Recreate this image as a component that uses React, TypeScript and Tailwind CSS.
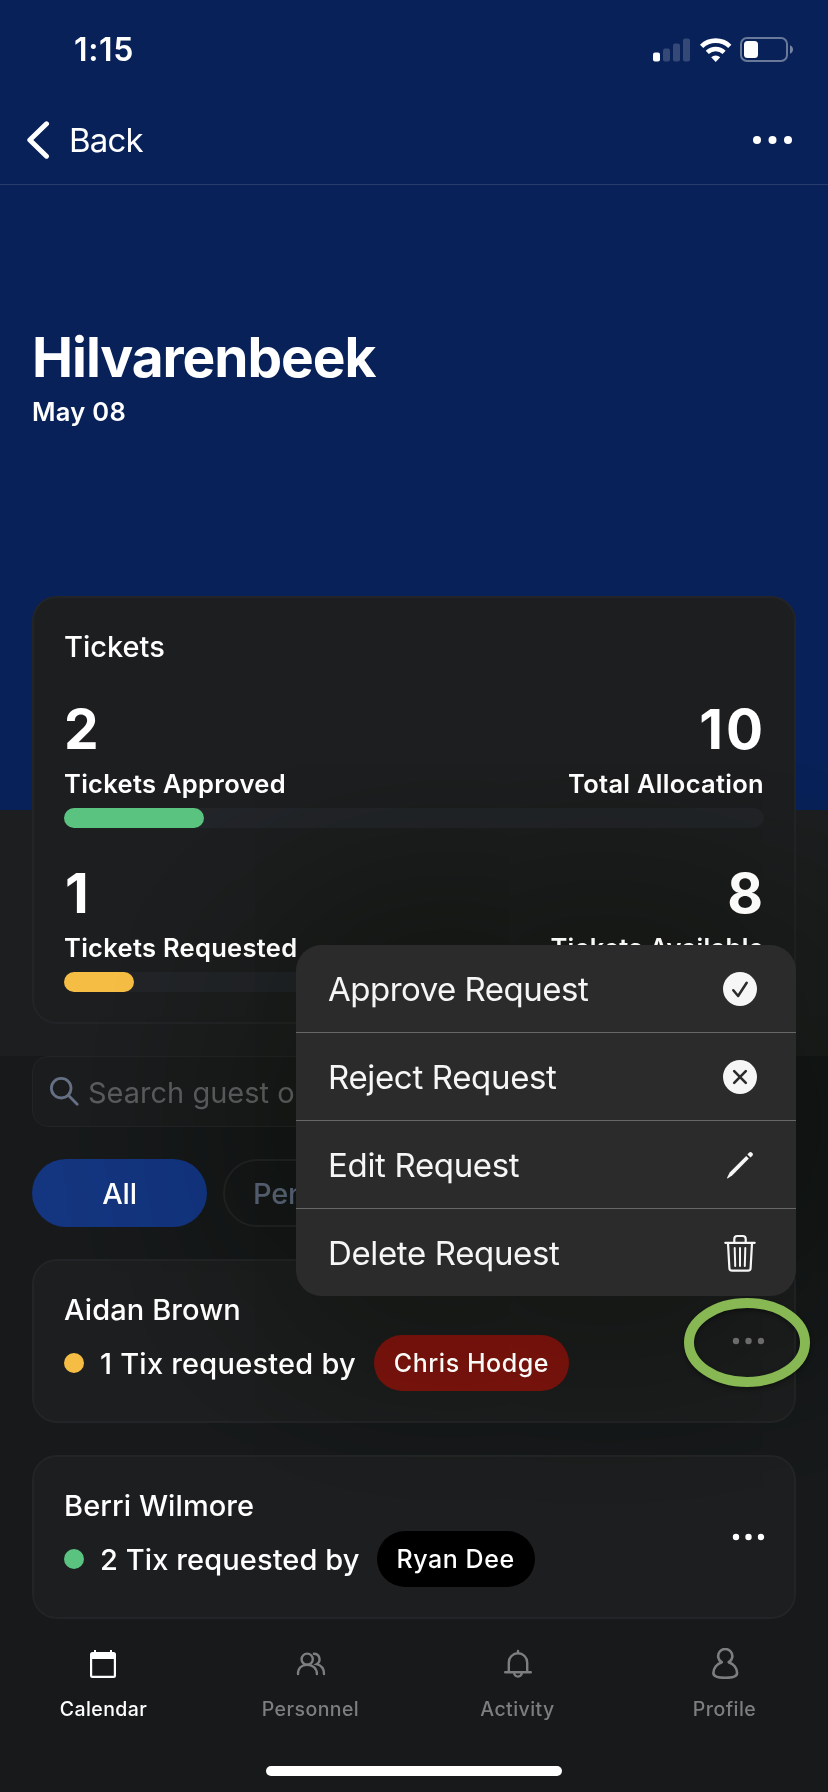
import type { ReactNode } from "react";

function StatusBar() {
  return (
    <div className="flex h-24 items-center justify-between pt-[3px] pr-[34px] pl-[74px]">
      <span className="text-[32px] leading-none font-semibold tracking-[0.68px]">1:15</span>
      <div className="flex items-center">
        <svg width="38" height="24" viewBox="0 0 38 24" fill="#fff">
          <rect x="0" y="14.5" width="7" height="9" rx="2" />
          <rect x="10" y="10.5" width="7" height="13" rx="2" opacity=".18" />
          <rect x="20" y="5.5" width="7" height="18" rx="2" opacity=".18" />
          <rect x="30" y="0.5" width="7" height="23" rx="2" opacity=".18" />
        </svg>
        <svg className="ml-2" width="34" height="26" viewBox="0 0 34 26" fill="none" stroke="#fff">
          <path d="M2.6 9.4a20.2 20.2 0 0 1 28.2 0" strokeWidth="4.6" />
          <path d="M8.3 15.4a12 12 0 0 1 16.8 0" strokeWidth="4.4" />
          <path d="M12.2 20.2a6.6 6.6 0 0 1 9 0l-4.5 4.8z" fill="#fff" stroke="none" />
        </svg>
        <svg className="ml-[7px]" width="54" height="26" viewBox="0 0 54 26">
          <rect x="1" y="1" width="46" height="23" rx="6" fill="none" stroke="#fff" strokeOpacity=".4" strokeWidth="2" />
          <rect x="4" y="4" width="14" height="17" rx="3.5" fill="#fff" />
          <path d="M50 8.3c4 1.4 4 7 0 8.4z" fill="#fff" fillOpacity=".45" />
        </svg>
      </div>
    </div>
  );
}

function NavBar() {
  return (
    <div className="flex h-[89px] items-center justify-between border-b border-[#293b6a] pr-9 pl-[26px]">
      <div className="flex items-center">
        <svg width="24" height="38" viewBox="0 0 24 38" fill="none" stroke="#fff" strokeWidth="5" strokeLinecap="round" strokeLinejoin="round">
          <path d="M20.5 2.8 3.8 19l16.700 16.200" />
        </svg>
        <span className="ml-[19px] text-[33px] leading-none tracking-[-0.8px]">Back</span>
      </div>
      <svg width="39" height="8" viewBox="0 0 39 8" fill="#fff">
        <circle cx="4" cy="4" r="4" />
        <circle cx="19.500" cy="4" r="4" />
        <circle cx="35" cy="4" r="4" />
      </svg>
    </div>
  );
}

function Stat({ value, label, right }: { value: ReactNode; label: string; right?: boolean }) {
  return (
    <div className={right ? "flex flex-col items-end" : "flex flex-col items-start"}>
      <span className="text-[55px] leading-[64px] font-bold">{value}</span>
      <span className="text-[25.5px] leading-[46px] font-[560] tracking-[0.3px]">{label}</span>
    </div>
  );
}

function Progress({ percent, color }: { percent: number; color: string }) {
  return (
    <div className="mt-px h-5 rounded-full bg-[#222429]">
      <div className={`h-full rounded-full ${color}`} style={{ width: `${percent}%` }} />
    </div>
  );
}

function TicketsCard() {
  return (
    <section className="mx-8 -mt-[214px] h-[428px] rounded-[25px] border-2 border-[#232427] bg-[#1d1e20] px-[30px] pt-[28px]">
      <h2 className="text-[29px] leading-[41px] font-medium">Tickets</h2>
      <div className="mt-[30px] flex justify-between">
        <Stat value="2" label="Tickets Approved" />
        <Stat right value={<span className="-mr-[2px] tracking-[3px]">10</span>} label="Total Allocation" />
      </div>
      <Progress percent={20} color="bg-[#5ac380]" />
      <div className="mt-[33px] flex justify-between">
        <Stat value={<span className="ml-px">1</span>} label="Tickets Requested" />
        <Stat right value={<span className="mr-px">8</span>} label="Tickets Available" />
      </div>
      <Progress percent={10} color="bg-[#f6bd45]" />
    </section>
  );
}

function SearchField() {
  return (
    <div className="mx-8 flex h-[71px] items-center rounded-2xl border border-[#232427] bg-[#1b1c1e] pl-[17px]">
      <svg width="29" height="29" viewBox="0 0 29 29" fill="none" stroke="#667085" strokeWidth="2.8" strokeLinecap="round">
        <circle cx="11.200" cy="11.200" r="9.800" />
        <path d="m18.300 18.300 8.900 8.900" />
      </svg>
      <span className="ml-[9px] pt-0.5 text-[29px] leading-none text-[#5a5b5e]">
        Search guest or personnel
      </span>
    </div>
  );
}

function Filters() {
  return (
    <div className="mx-8 mt-8 flex h-[68px] gap-4 text-[29px] leading-none font-medium tracking-[-0.2px]">
      <div className="flex w-[175px] items-center justify-center rounded-full bg-[#14357f]">All</div>
      <div className="flex w-[176px] items-center rounded-full border-2 border-[#232427] pl-[28px] text-[#576073]">
        Pending
      </div>
    </div>
  );
}

function RequestCard({ name, request, dot, by, pill, dots }: {
  name: string; request: ReactNode; dot: string; by: string; pill: string; dots: string;
}) {
  return (
    <article className="mx-8 mt-8 flex h-[164px] items-center justify-between rounded-[25px] border-2 border-[#232427] bg-[#1d1e20] pr-[29px] pl-[30px]">
      <div className="h-full pt-[28px]">
        <h3 className="text-[29px] leading-[41px] font-medium tracking-[0.1px]">{name}</h3>
        <div className="mt-[5px] flex h-14 items-center">
          <span className={`size-5 rounded-full ${dot}`} />
          <span className="ml-4 text-[29px] leading-none font-medium">{request}</span>
          <span className={`flex h-14 items-center justify-center rounded-full text-[25px] leading-none font-[450] tracking-[0.55px] ${pill}`}>
            {by}
          </span>
        </div>
      </div>
      <svg width="33" height="8" viewBox="0 0 33 8" className={dots} fill="currentColor">
        <circle cx="4" cy="4" r="3.2" />
        <circle cx="16.500" cy="4" r="3.2" />
        <circle cx="29" cy="4" r="3.2" />
      </svg>
    </article>
  );
}

function CalendarIcon() {
  return (
    <svg className="-ml-px" width="32" height="32" viewBox="0 0 32 32">
      <path fill="#fff" fillRule="evenodd" d="M7 2h2v2h14V2h2v2h1.500A2.500 2.500 0 0 1 29 6.500v21a2.500 2.500 0 0 1-2.500 2.500h-21A2.500 2.500 0 0 1 3 27.500v-21A2.500 2.500 0 0 1 5.500 4H7zM5.200 11v16.700h21.600V11z" />
    </svg>
  );
}

function PeopleIcon() {
  return (
    <svg width="32" height="32" viewBox="0 0 32 32" fill="none" stroke="currentColor" strokeWidth="2.400" strokeLinecap="round">
      <circle cx="12.200" cy="11.200" r="5.600" />
      <path d="M3 26c0-6 4-9.200 9.200-9.200S21.900 20 21.900 26" />
      <path d="M18.900 5.700a5.600 5.600 0 0 1 2.700 10.500c4.600 1.100 7.400 4.700 7.400 9.800" />
    </svg>
  );
}

function BellIcon() {
  return (
    <svg width="32" height="32" viewBox="0 0 32 32" fill="none" stroke="currentColor" strokeWidth="2.400" strokeLinecap="round">
      <path d="M16 3v2.200M6.800 23.600V14.500a9.200 9.200 0 0 1 18.400 0v9.100M3.200 24.300h25.600" />
      <path d="M12.200 24.800a3.800 3.800 0 0 0 7.600 0" />
    </svg>
  );
}

function ProfileIcon() {
  return (
    <svg width="32" height="32" viewBox="0 0 32 32" fill="none" stroke="currentColor" strokeWidth="2.600" strokeLinecap="round" strokeLinejoin="round">
      <path d="M12.600 14.200a7.100 7.100 0 1 1 7.300 0" />
      <path d="M12.600 14.200C7.800 16 4.400 20.300 4.400 25c0 3.600 5.300 4.800 11.800 4.800S28.100 28.600 28.100 25c0-4.700-3.400-9-8.200-10.800" />
    </svg>
  );
}

function TabBar() {
  const tabs = [
    { label: "Calendar", icon: <CalendarIcon />, active: true },
    { label: "Personnel", icon: <PeopleIcon />, active: false },
    { label: "Activity", icon: <BellIcon />, active: false },
    { label: "Profile", icon: <ProfileIcon />, active: false },
  ];
  return (
    <nav className="mt-[29px] grid grid-cols-4">
      {tabs.map((tab) => (
        <div key={tab.label} className={tab.active ? "flex flex-col items-center text-white" : "flex flex-col items-center text-[#7d7e80]"}>
          {tab.icon}
          <span className="mt-[15px] text-[19.5px] leading-[28px] font-medium tracking-[0.44px]">{tab.label}</span>
        </div>
      ))}
    </nav>
  );
}

function CheckCircle() {
  return (
    <svg width="34" height="34" viewBox="0 0 34 34" fill="none">
      <circle cx="17" cy="17" r="17" fill="#f6f6f6" />
      <path d="m10.300 18.300 4.800 5.700 8.600-13.200" stroke="#2b2b2b" strokeWidth="2.500" strokeLinecap="round" strokeLinejoin="round" />
    </svg>
  );
}

function CrossCircle() {
  return (
    <svg width="34" height="34" viewBox="0 0 34 34" fill="none">
      <circle cx="17" cy="17" r="17" fill="#f6f6f6" />
      <path d="m11.200 11.200 11.600 11.600M22.800 11.200 11.200 22.800" stroke="#2b2b2b" strokeWidth="2.600" strokeLinecap="round" />
    </svg>
  );
}

function Pencil() {
  return (
    <svg width="34" height="34" viewBox="0 0 34 34" fill="#f6f6f6">
      <path d="M23.200 7.900 25.900 10.600 9.400 27.200 4.600 30.400Q3.900 30.500 4.100 29.700L6.700 24.500z" />
      <path d="m24.400 6.500 1.800-1.900a1.900 1.900 0 0 1 2.600 0l.6.6a1.900 1.900 0 0 1 0 2.600l-1.900 1.800z" />
    </svg>
  );
}

function Trash() {
  return (
    <svg width="34" height="38" viewBox="0 0 34 38" fill="none" stroke="#f6f6f6" strokeWidth="2.200" strokeLinecap="round" strokeLinejoin="round">
      <path d="M2.300 8.800h29.400M11.300 8.300V5a3 3 0 0 1 3-3h5.400a3 3 0 0 1 3 3v3.300" />
      <path d="m5 9.200 1.400 25a2.500 2.500 0 0 0 2.500 2.400h16.200a2.500 2.500 0 0 0 2.500-2.400L29 9.200" />
      <path d="m11.700 14 .5 18M17 14v18M22.300 14l-.5 18" strokeWidth="2" />
    </svg>
  );
}

function ContextMenu() {
  const items = [
    { label: "Approve Request", icon: <CheckCircle />, tracking: "tracking-[-0.5px]" },
    { label: "Reject Request", icon: <CrossCircle />, tracking: "tracking-[-0.34px]" },
    { label: "Edit Request", icon: <Pencil />, tracking: "tracking-[-0.33px]" },
    { label: "Delete Request", icon: <Trash />, tracking: "tracking-[-0.36px]" },
  ];
  return (
    <>
      <div className="absolute top-[945px] left-[296px] h-[351px] w-[500px] rounded-[26px] mix-blend-difference shadow-[0_0_240px_40px_#110e17]" />
      <div className="absolute top-[945px] left-[296px] w-[500px] divide-y divide-[#676767] overflow-hidden rounded-[26px] bg-[#2b2b2b] text-[#f6f6f6]">
        {items.map((item) => (
          <div key={item.label} className="flex h-[88px] items-center justify-between pr-[39px] pl-8 last:h-[87px]">
            <span className={`pt-px text-[33px] leading-none ${item.tracking}`}>{item.label}</span>
            {item.icon}
          </div>
        ))}
      </div>
    </>
  );
}

export default function App() {
  return (
    <div className="relative isolate flex h-[1792px] w-[828px] flex-col overflow-hidden bg-[#17191b] font-['Inter',sans-serif] whitespace-nowrap text-white">
      <header className="h-[810px] shrink-0 bg-[#082158]">
        <StatusBar />
        <NavBar />
        <div className="px-8 pt-[140px]">
          <h1 className="text-[55px] leading-[64px] font-bold tracking-[-1.050px]">Hilvarenbeek</h1>
          <p className="text-[25.5px] leading-[46px] font-[560] tracking-[0.3px]">May 08</p>
        </div>
      </header>
      <div className="h-[246px] shrink-0 bg-[#1d1e20]">
        <TicketsCard />
      </div>
      <SearchField />
      <Filters />
      <RequestCard
        name="Aidan Brown"
        request={<span className="tracking-[0.22px]">1 Tix requested by</span>}
        dot="bg-[#f6bd45]"
        by="Chris Hodge"
        pill="ml-[18px] w-[195px] bg-[#78160f]"
        dots="text-[#707070]"
      />
      <RequestCard
        name="Berri Wilmore"
        request={<span className="tracking-[0.1px]">2 Tix requested by</span>}
        dot="bg-[#5ac380]"
        by="Ryan Dee"
        pill="ml-[17px] w-[158px] bg-black"
        dots="text-white"
      />
      <TabBar />
      <div className="mx-auto mt-[43px] h-2.5 w-[296px] shrink-0 rounded-full bg-white" />
      <ContextMenu />
      <svg className="absolute top-[1294px] left-[680px] drop-shadow-[0_2px_2px_rgba(0,0,0,0.4)]" width="134" height="97" viewBox="0 0 134 97" fill="none">
        <ellipse cx="67" cy="48.500" rx="58" ry="39.500" stroke="#87b853" strokeWidth="10" />
      </svg>
    </div>
  );
}
